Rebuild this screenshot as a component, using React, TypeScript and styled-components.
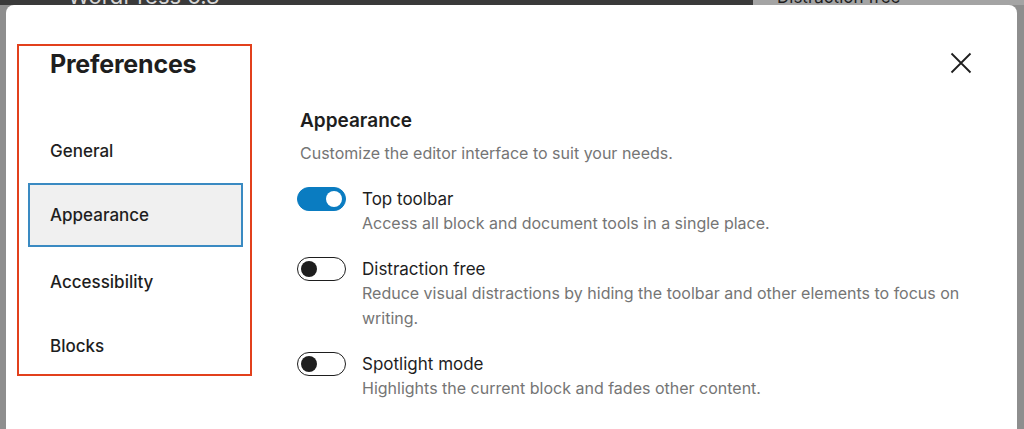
import React from "react";
import styled, { createGlobalStyle } from "styled-components";

const ink = "#1e1e1e";
const muted = "#757575";
const accent = "#0a7cc1";

const GlobalStyle = createGlobalStyle`
  html, body {
    margin: 0;
    padding: 0;
    background: #8e8e8e;
  }
  body {
    font-family: Inter, "Noto Sans", "Liberation Sans", sans-serif;
    -webkit-font-smoothing: antialiased;
  }
`;

const Screen = styled.div`
  height: 429px;
  display: flex;
  flex-direction: column;
  background: #8e8e8e;
  overflow: hidden;
`;

const TopStrip = styled.div`
  height: 5px;
  flex-shrink: 0;
  display: flex;
  overflow: hidden;
`;

const StripPart = styled.div<{ $light?: boolean }>`
  box-sizing: border-box;
  flex: ${(p) => (p.$light ? "1" : "0 0 753px")};
  background: ${(p) => (p.$light ? "#a4a4a4" : "#3a3a3a")};
  padding-left: ${(p) => (p.$light ? "24px" : "68px")};
  overflow: hidden;
`;

const StripLabel = styled.div<{ $size: number; $color: string }>`
  font-size: ${(p) => p.$size}px;
  line-height: 1;
  color: ${(p) => p.$color};
  white-space: nowrap;
  margin-top: ${(p) => 4 - p.$size * 0.864}px;
`;

const Modal = styled.div`
  flex: 1;
  margin: 0 7px 0 6px;
  background: #fff;
  border-radius: 8px 8px 0 0;
  display: flex;
  align-items: flex-start;
`;

const Nav = styled.nav`
  width: 235px;
  height: 332px;
  box-sizing: border-box;
  margin: 39px 0 0 11px;
  border: 2px solid #e2401c;
  display: flex;
  flex-direction: column;
  flex-shrink: 0;
`;

const Title = styled.h1`
  margin: 3px 0 0 31px;
  font-size: 25px;
  line-height: 30px;
  font-weight: 650;
  color: ${ink};
  letter-spacing: -0.2px;
`;

const NavList = styled.div`
  margin-top: 40px;
  display: flex;
  flex-direction: column;
`;

const NavItem = styled.div<{ $active?: boolean }>`
  height: 64px;
  box-sizing: border-box;
  margin: 0 7px ${(p) => (p.$active ? "3px" : "0")} 9px;
  padding-left: 20px;
  display: flex;
  align-items: center;
  font-size: 17px;
  font-weight: 500;
  color: ${ink};
  border: 2px solid ${(p) => (p.$active ? "#3a8ac2" : "transparent")};
  background: ${(p) => (p.$active ? "#f0f0f0" : "transparent")};
`;

const Content = styled.main`
  flex: 1;
  margin-left: 48px;
  padding: 38px 36px 0 0;
  display: flex;
  flex-direction: column;
`;

const CloseRow = styled.div`
  display: flex;
  justify-content: flex-end;
`;

const CloseButton = styled.button`
  width: 40px;
  height: 40px;
  padding: 0;
  border: none;
  background: none;
  display: grid;
  place-items: center;
  color: ${ink};
`;

const SectionTitle = styled.h2`
  margin: 26px 0 0;
  font-size: 19px;
  line-height: 24px;
  font-weight: 600;
  color: ${ink};
`;

const SectionDesc = styled.p`
  margin: 8px 0 0;
  font-size: 16px;
  line-height: 24px;
  color: ${muted};
`;

const OptionList = styled.div`
  margin-top: 22px;
  display: flex;
  flex-direction: column;
  gap: 21px;
`;

const Option = styled.div`
  display: flex;
  align-items: flex-start;
  gap: 16px;
`;

const Toggle = styled.span<{ $on?: boolean }>`
  flex-shrink: 0;
  margin-left: -3px;
  width: 49px;
  height: 24px;
  box-sizing: border-box;
  border-radius: 12px;
  border: 1.5px solid ${(p) => (p.$on ? accent : ink)};
  background: ${(p) => (p.$on ? accent : "#fff")};
  display: flex;
  align-items: center;
  justify-content: ${(p) => (p.$on ? "flex-end" : "flex-start")};
  padding: 0 3px;
`;

const Knob = styled.span<{ $on?: boolean }>`
  width: 16px;
  height: 16px;
  border-radius: 50%;
  background: ${(p) => (p.$on ? "#fff" : ink)};
`;

const OptionText = styled.div`
  display: flex;
  flex-direction: column;
`;

const OptionLabel = styled.span`
  font-size: 17px;
  line-height: 24px;
  color: ${ink};
`;

const OptionHelp = styled.span`
  font-size: 16px;
  line-height: 25px;
  color: ${muted};
`;

const options = [
  {
    label: "Top toolbar",
    help: "Access all block and document tools in a single place.",
    on: true,
  },
  {
    label: "Distraction free",
    help: "Reduce visual distractions by hiding the toolbar and other elements to focus on writing.",
    on: false,
  },
  {
    label: "Spotlight mode",
    help: "Highlights the current block and fades other content.",
    on: false,
  },
];

const tabs = ["General", "Appearance", "Accessibility", "Blocks"];

export default function App() {
  return (
    <>
      <GlobalStyle />
      <Screen>
        <TopStrip>
          <StripPart>
            <StripLabel $size={22} $color="#d6d6d6">WordPress 6.3</StripLabel>
          </StripPart>
          <StripPart $light>
            <StripLabel $size={17} $color="#1e1e1e">Distraction free</StripLabel>
          </StripPart>
        </TopStrip>
        <Modal>
          <Nav>
            <Title>Preferences</Title>
            <NavList>
              {tabs.map((t) => (
                <NavItem key={t} $active={t === "Appearance"}>
                  {t}
                </NavItem>
              ))}
            </NavList>
          </Nav>
          <Content>
            <CloseRow>
              <CloseButton aria-label="Close">
                <svg width="22" height="22" viewBox="0 0 22 22" fill="none">
                  <path d="M1.5 1.5 L20.5 20.5 M20.5 1.5 L1.5 20.5" stroke="currentColor" strokeWidth="1.8" />
                </svg>
              </CloseButton>
            </CloseRow>
            <SectionTitle>Appearance</SectionTitle>
            <SectionDesc>Customize the editor interface to suit your needs.</SectionDesc>
            <OptionList>
              {options.map((o) => (
                <Option key={o.label}>
                  <Toggle $on={o.on}>
                    <Knob $on={o.on} />
                  </Toggle>
                  <OptionText>
                    <OptionLabel>{o.label}</OptionLabel>
                    <OptionHelp>{o.help}</OptionHelp>
                  </OptionText>
                </Option>
              ))}
            </OptionList>
          </Content>
        </Modal>
      </Screen>
    </>
  );
}
